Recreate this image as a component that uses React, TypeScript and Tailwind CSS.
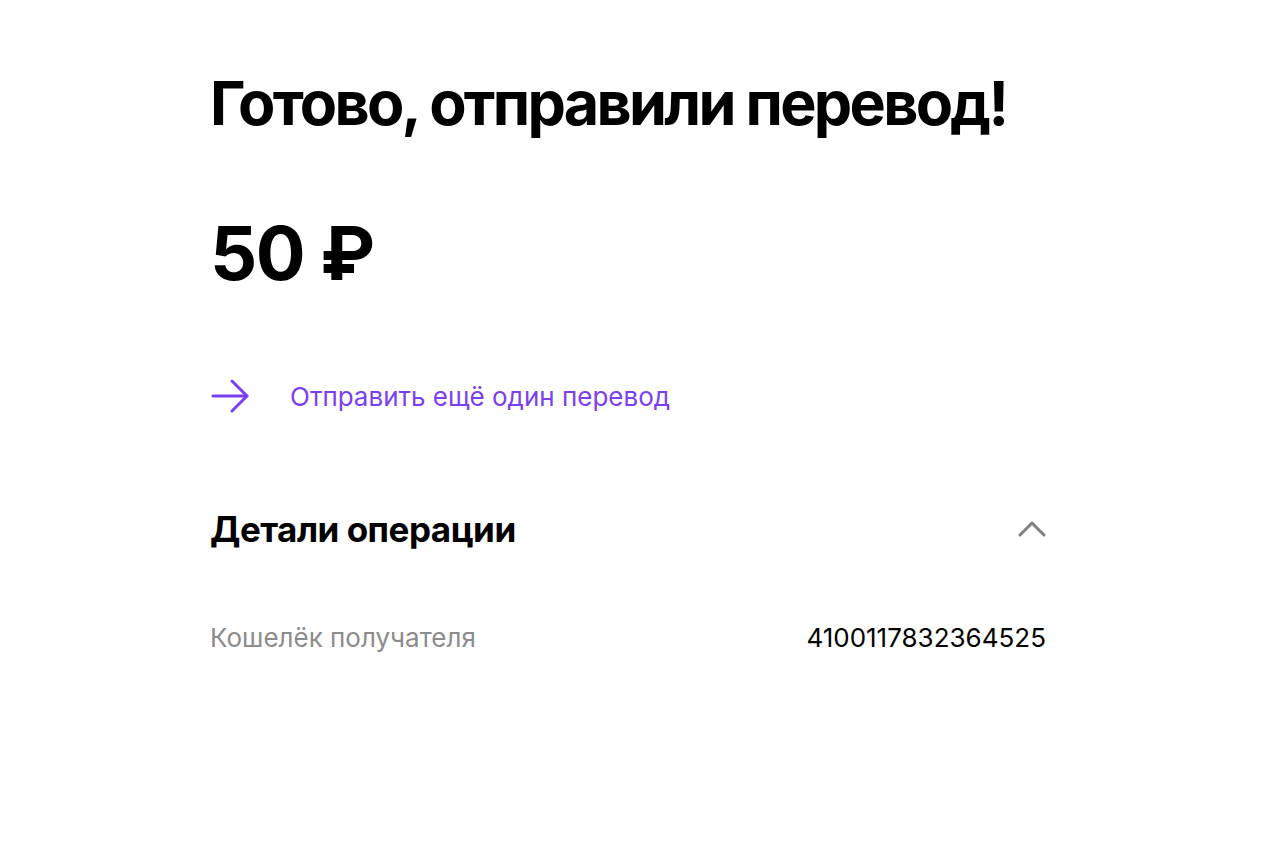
const font = "font-['Inter','Noto_Sans',sans-serif]";

const ArrowRight = () => (
  <svg width="40" height="40" viewBox="0 0 40 40" fill="none" stroke="#7b3ff2" strokeWidth="3" strokeLinecap="round" strokeLinejoin="round">
    <path d="M3 20h34" />
    <path d="M22 5l15 15-15 15" />
  </svg>
);

const ChevronUp = () => (
  <svg width="28" height="18" viewBox="0 0 28 18" fill="none" stroke="#808080" strokeWidth="3" strokeLinecap="round" strokeLinejoin="round">
    <path d="M2 15L14 3l12 12" />
  </svg>
);

export default function App() {
  return (
    <div className={`min-h-screen bg-white ${font}`}>
      <div className="ml-[210px] w-[836px] pt-[67px]">
        <h1 className="whitespace-nowrap text-[61px] font-bold leading-[72px] tracking-[-2.7px] text-black">
          Готово, отправили перевод!
        </h1>

        <div className="mt-[71px] text-[74px] font-bold leading-[86px] tracking-[-1.5px] text-black">
          50 ₽
        </div>

        <button className="mt-[80px] flex items-center gap-[40px] text-[26px] text-[#7b3ff2]">
          <ArrowRight />
          <span>Отправить ещё один перевод</span>
        </button>

        <div className="mt-[91px] flex items-center justify-between">
          <h2 className="text-[35px] font-bold leading-[44px] tracking-[-0.5px] text-black">
            Детали операции
          </h2>
          <ChevronUp />
        </div>

        <div className="mt-[67px] flex items-center justify-between text-[26px]">
          <span className="text-[#8c8c8c]">Кошелёк получателя</span>
          <span className="text-black">4100117832364525</span>
        </div>
      </div>
    </div>
  );
}
